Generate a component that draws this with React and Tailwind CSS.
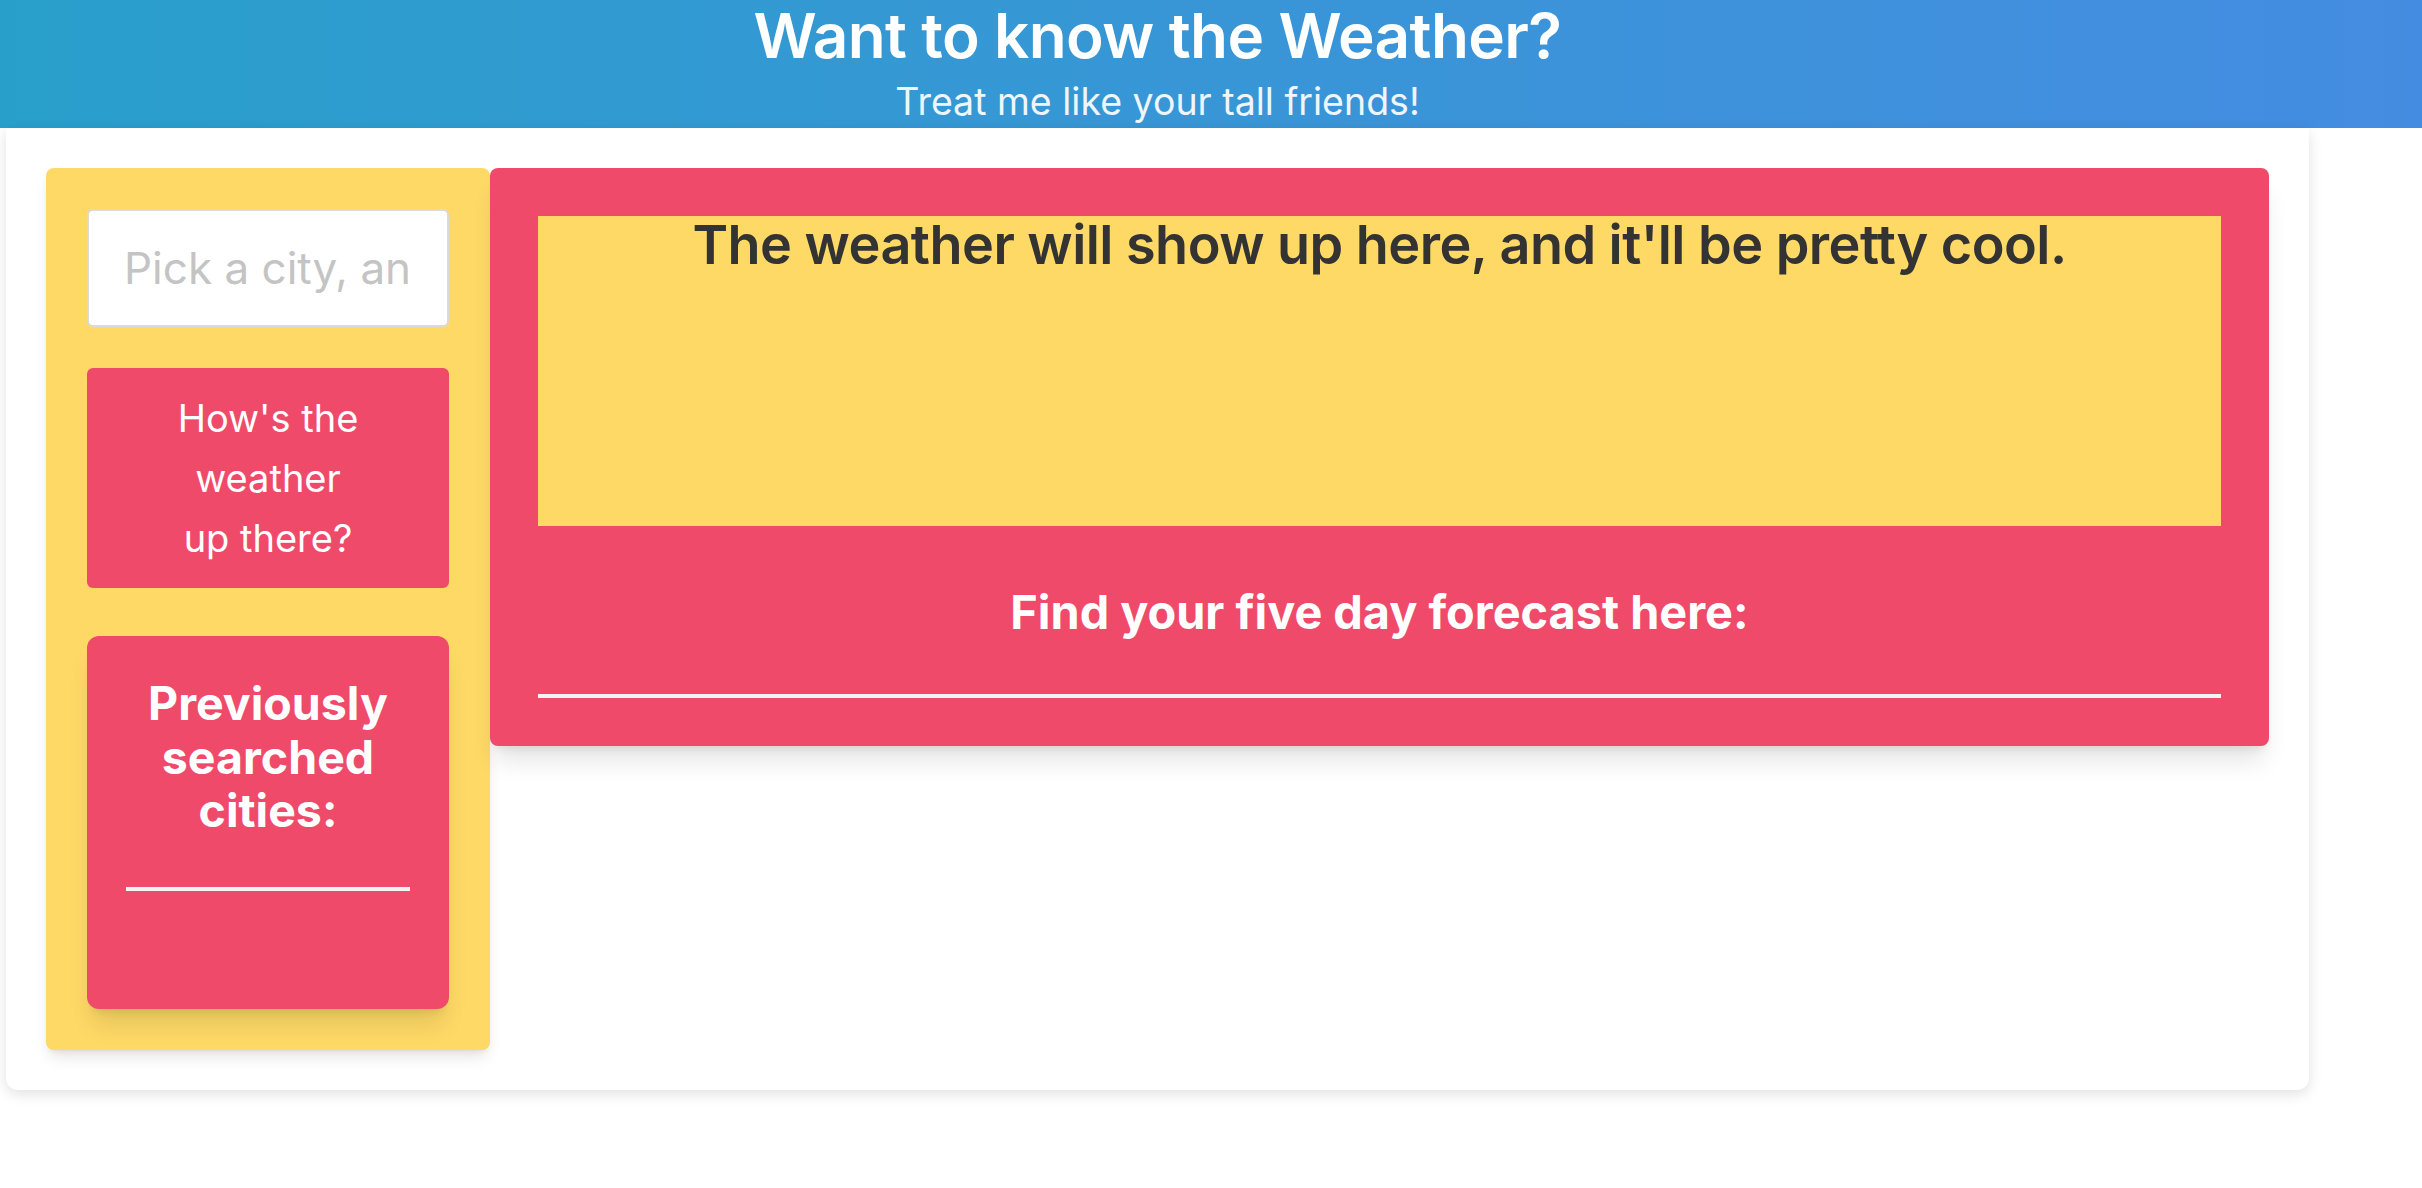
const RED = 'bg-[#ef4a6a]';

function Header() {
  return (
    <header className="h-[128px] w-full bg-linear-to-r from-[#289fcb] to-[#448ce1] text-white">
      <div className="w-[2315px] text-center">
        <h1 className="text-[62px] font-semibold leading-[72px] tracking-[-0.01em]">
          Want to know the Weather?
        </h1>
        <p className="pt-[6px] text-[37.5px] leading-[48px] text-[#eef6fb]">Treat me like your tall friends!</p>
      </div>
    </header>
  );
}

function SearchPanel() {
  return (
    <aside className="flex w-[444px] shrink-0 flex-col rounded-lg bg-[#fed966] p-[41px] shadow-lg">
      <input
        type="text"
        placeholder="Pick a city, any city"
        className="h-[118px] w-full rounded-md border-2 border-[#dadada] bg-white pl-[35px] pr-[39px] text-[44px] text-[#333] outline-none placeholder:text-[#c4c4c4]"
      />
      <button className={`mt-[41px] h-[220px] w-full rounded-md ${RED} text-[38px] leading-[60px] text-white`}>
        How's the
        <br />
        weather
        <br />
        up there?
      </button>
      <div className={`mt-[48px] h-[373px] rounded-xl ${RED} px-[39px] pt-[41px] shadow-xl`}>
        <h2 className="text-center text-[46.5px] font-bold leading-[53.5px] text-white">
          Previously searched cities:
        </h2>
        <div className="mt-[49px] h-[4px] bg-[#f4f4f4]" />
      </div>
    </aside>
  );
}

function WeatherPanel() {
  return (
    <section className={`flex-1 rounded-lg ${RED} p-[48px] shadow-xl`}>
      <div className="h-[310px] bg-[#fed966]">
        <h2 className="text-center text-[54px] font-semibold leading-[57px] tracking-[-0.01em] text-[#333]">
          The weather will show up here, and it'll be pretty cool.
        </h2>
      </div>
      <div className="flex h-[168px] items-center justify-center pt-[5px]">
        <h3 className="text-[46.8px] font-bold text-white">Find your five day forecast here:</h3>
      </div>
      <div className="h-[4px] bg-[#f4f4f4]" />
    </section>
  );
}

export default function App() {
  return (
    <div className="min-h-[1188px] bg-white font-['Inter','Noto_Sans',sans-serif]">
      <Header />
      <main className="ml-[6px] flex w-[2303px] items-start rounded-b-xl bg-white p-[40px] shadow-[0_4px_14px_rgba(0,0,0,0.12)]">
        <SearchPanel />
        <WeatherPanel />
      </main>
    </div>
  );
}
